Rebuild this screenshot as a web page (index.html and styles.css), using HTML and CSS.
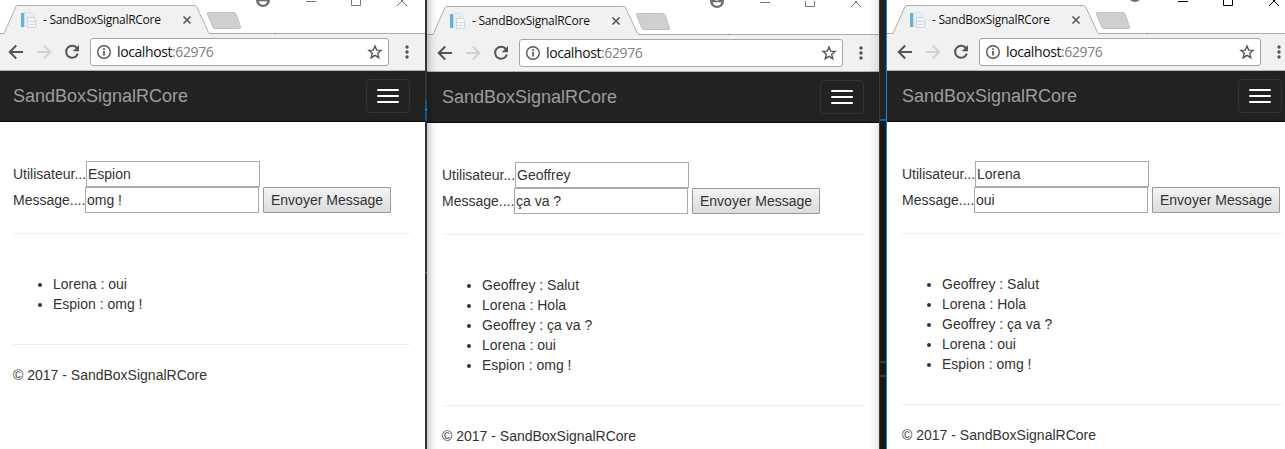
FILE: index.html
```
<!DOCTYPE html>
<html lang="fr">
<head>
<meta charset="utf-8">
<title>- SandBoxSignalRCore</title>
<link rel="stylesheet" href="styles.css">
</head>
<body>
<svg class="defs" width="0" height="0">
  <symbol id="tab" viewBox="0 0 250 34">
    <path d="M6 34 L18 6.500 Q18.500 5.500 20 5.500 H196.500 Q198 5.500 198.500 6.500 L210.500 32.500 L211 34Z" fill="#f1f1f1"/>
    <path d="M0 33.500 H5 Q6 33.500 6.500 32.500 L18 6.500 Q18.500 5.500 20 5.500 H196.500 Q198 5.500 198.500 6.500 L210.500 32.500 Q211 33.500 212 33.500 H250" fill="none" stroke="#adadad"/>
    <path d="M210.500 12.500 H236 Q237.500 12.500 238 14 L242.600 27 Q243 28.500 241.500 28.500 H217 Q215.500 28.500 214.800 27 L209.400 14 Q208.800 12.500 210.500 12.500Z" fill="#cfcfcf" stroke="#c0c0c0"/>
    <path d="M23 13 H26.500 V27 H23Z" fill="#68afd8"/>
    <path d="M26.500 12.500 H33 L36 15.500 V26.500 H26.500Z" fill="#e8eef5" stroke="#d3dce5" stroke-width=".7"/>
    <path d="M29.500 17.500 H36 L37.700 19.500 V27.500 H29.500Z" fill="#f3f6fa" stroke="#c5ced8" stroke-width=".8"/>
    <path d="M30 21.500H37M31 24.500H36" stroke="#d0d9e5"/>
    <path d="M185.500 16.500 L192.500 23.500 M192.500 16.500 L185.500 23.500" stroke="#555" stroke-width="1.600"/>
  </symbol>
  <symbol id="back" viewBox="0 0 16 16"><path d="M15 8H2M8.200 1.500L1.700 8l6.500 6.500" fill="none" stroke="currentColor" stroke-width="2"/></symbol>
  <symbol id="forward" viewBox="0 0 16 16"><path d="M1 8H14M7.800 1.500L14.300 8l-6.500 6.500" fill="none" stroke="currentColor" stroke-width="2"/></symbol>
  <symbol id="reload" viewBox="0 0 16 16"><path d="M13 4.200A6 6 0 1 0 13.800 9.700" fill="none" stroke="#555" stroke-width="2"/><path d="M15 1V7.300H8.700Z" fill="#555"/></symbol>
  <symbol id="info" viewBox="0 0 16 16"><circle cx="8" cy="8" r="6.300" fill="none" stroke="#555" stroke-width="1.400"/><path d="M8 7V11.500M8 4.300V6" stroke="#555" stroke-width="1.700"/></symbol>
  <symbol id="star" viewBox="0 0 16 16"><path d="M8 2L9.700 6.100L14.100 6.400L10.700 9.300L11.800 13.700L8 11.300L4.200 13.700L5.300 9.300L1.900 6.400L6.300 6.100Z" fill="none" stroke="#555" stroke-width="1.400"/></symbol>
  <symbol id="dots" viewBox="0 0 4 14"><g fill="#555"><circle cx="2" cy="2" r="1.700"/><circle cx="2" cy="7" r="1.700"/><circle cx="2" cy="12" r="1.700"/></g></symbol>
  <symbol id="controls" viewBox="0 0 180 34">
    <path d="M61 1.500H71M106.500 -4V5.500H115.500V-4M152 6L162 -4M152 -4L162 6" fill="none" stroke="currentColor"/>
    <path d="M30 33.500H31" stroke="#555"/>
  </symbol>
  <symbol id="user" viewBox="0 0 16 16"><circle cx="8" cy="8" r="7" fill="#6e6e6e"/><circle cx="8" cy="5.500" r="2.300" fill="#fff"/><path d="M3.800 9.200H12.200Q11.500 12.700 8 12.700T3.800 9.200Z" fill="#fff"/></symbol>
</svg>
<div class="desktop">
  <section class="window window-left">
    <header class="tabstrip">
      <svg class="tab-shape"><use href="#tab"/></svg>
      <span class="tab-title">- SandBoxSignalRCore</span>
      <svg class="user"><use href="#user"/></svg>
      <svg class="controls"><use href="#controls"/></svg>
    </header>
    <div class="toolbar">
      <svg class="icon"><use href="#back"/></svg><svg class="icon off"><use href="#forward"/></svg><svg class="icon"><use href="#reload"/></svg>
      <div class="address"><svg class="icon"><use href="#info"/></svg><span class="url">localhost<i>:62976</i></span><svg class="icon"><use href="#star"/></svg></div>
      <svg class="dots"><use href="#dots"/></svg>
    </div>
    <nav class="navbar"><span class="brand">SandBoxSignalRCore</span><button class="toggle"><b></b><b></b><b></b></button></nav>
    <main class="page">
      <div class="row"><label class="name">Utilisateur...</label><input class="field" value="Espion"></div>
      <div class="row"><label class="message">Message....</label><input class="field" value="omg !"><button class="send">Envoyer Message</button></div>
      <hr>
      <ul class="messages"><li>Lorena : oui</li><li>Espion : omg !</li></ul>
      <hr>
      <footer>© 2017 - SandBoxSignalRCore</footer>
    </main>
  </section>
  <div class="seam"></div>
  <section class="window window-middle">
    <header class="tabstrip">
      <svg class="tab-shape"><use href="#tab"/></svg>
      <span class="tab-title">- SandBoxSignalRCore</span>
      <svg class="user"><use href="#user"/></svg>
      <svg class="controls"><use href="#controls"/></svg>
    </header>
    <div class="toolbar">
      <svg class="icon"><use href="#back"/></svg><svg class="icon off"><use href="#forward"/></svg><svg class="icon"><use href="#reload"/></svg>
      <div class="address"><svg class="icon"><use href="#info"/></svg><span class="url">localhost<i>:62976</i></span><svg class="icon"><use href="#star"/></svg></div>
      <svg class="dots"><use href="#dots"/></svg>
    </div>
    <nav class="navbar"><span class="brand">SandBoxSignalRCore</span><button class="toggle"><b></b><b></b><b></b></button></nav>
    <main class="page">
      <div class="row"><label class="name">Utilisateur...</label><input class="field" value="Geoffrey"></div>
      <div class="row"><label class="message">Message....</label><input class="field" value="ça va ?"><button class="send">Envoyer Message</button></div>
      <hr>
      <ul class="messages"><li>Geoffrey : Salut</li><li>Lorena : Hola</li><li>Geoffrey : ça va ?</li><li>Lorena : oui</li><li>Espion : omg !</li></ul>
      <hr>
      <footer>© 2017 - SandBoxSignalRCore</footer>
    </main>
  </section>
  <div class="gap"></div>
  <section class="window window-right">
    <header class="tabstrip">
      <svg class="tab-shape"><use href="#tab"/></svg>
      <span class="tab-title">- SandBoxSignalRCore</span>
      <svg class="user"><use href="#user"/></svg>
      <svg class="controls"><use href="#controls"/></svg>
    </header>
    <div class="toolbar">
      <svg class="icon"><use href="#back"/></svg><svg class="icon off"><use href="#forward"/></svg><svg class="icon"><use href="#reload"/></svg>
      <div class="address"><svg class="icon"><use href="#info"/></svg><span class="url">localhost<i>:62976</i></span><svg class="icon"><use href="#star"/></svg></div>
      <svg class="dots"><use href="#dots"/></svg>
    </div>
    <nav class="navbar"><span class="brand">SandBoxSignalRCore</span><button class="toggle"><b></b><b></b><b></b></button></nav>
    <main class="page">
      <div class="row"><label class="name">Utilisateur...</label><input class="field" value="Lorena"></div>
      <div class="row"><label class="message">Message....</label><input class="field" value="oui"><button class="send">Envoyer Message</button></div>
      <hr>
      <ul class="messages"><li>Geoffrey : Salut</li><li>Lorena : Hola</li><li>Geoffrey : ça va ?</li><li>Lorena : oui</li><li>Espion : omg !</li></ul>
      <hr>
      <footer>© 2017 - SandBoxSignalRCore</footer>
    </main>
  </section>
</div>
</body>
</html>
```
FILE: styles.css
```
* { box-sizing: border-box; }
body { margin: 0; overflow: hidden; font: 14px/20px "Liberation Sans", Arial, sans-serif; color: #333; }
.defs { position: absolute; }
.desktop { display: flex; width: 1285px; height: 449px; overflow: hidden; background: #fff; }
.window { position: relative; flex: none; height: 449px; overflow: hidden; background: #fff; }
.window-left { width: 427px; margin-left: -2px; }
.window-middle { width: 452px; padding-top: 1px; }
.window-right { width: 410px; }
.window-middle::before, .window-middle::after { content: ""; position: absolute; top: 0; bottom: 0; width: 11px; z-index: 2; }
.window-middle::before { left: 0; background: linear-gradient(90deg, rgba(0,0,0,.2), rgba(0,0,0,.05) 50%, transparent); }
.window-middle::after { right: 0; background: linear-gradient(270deg, rgba(0,0,0,.09), rgba(0,0,0,.03) 50%, transparent); }
.seam { flex: none; width: 2px; background: linear-gradient(#333 90px, #303438 90px, #303438 100px, #155682 100px, #155682 109px, #5591b7 109px, #5591b7 110px, #155682 110px, #155682 121px, #303030 121px, #303030 272px, #666 272px, #666 273px, #303030 273px); }
.gap { flex: none; width: 8px; border-left: 1px solid #3a3a3a; border-right: 1px solid #1883d7; background: linear-gradient(#202225 119px, #07629c 119px, #07629c 121px, #191919 121px, #191919 361px, #363636 361px, #363636 363px, #191919 363px, #191919 375px, #363636 375px, #363636 377px, #191919 377px); }

.tabstrip { position: relative; height: 34px; display: flex; background: linear-gradient(#adadad, #adadad) 0 33px / 100% 1px no-repeat #fff; }
.tab-shape { flex: none; width: 250px; height: 34px; }
.tab-title { position: absolute; left: 45px; top: 11px; font: 12px/18px "Open Sans", sans-serif; letter-spacing: -.28px; color: #111; white-space: nowrap; }
.user { position: absolute; right: 154px; top: -8px; width: 16px; height: 16px; }
.window-right .user { top: -13px; }
.controls { position: absolute; right: 0; top: 0; width: 180px; height: 34px; color: #777; }
.window-right .controls { color: #000; }

.toolbar { display: flex; align-items: center; height: 37px; padding: 0 16px 1px 10px; background: #f1f1f1; border-bottom: 1px solid #b4b4b4; }
.icon { flex: none; width: 16px; height: 16px; margin-right: 12px; color: #555; }
.off { color: #d2d2d2; }
.address { display: flex; align-items: center; flex: 1; height: 28px; margin-left: -2px; padding: 0 5px; border: 1px solid #a8a8a8; border-radius: 3px; background: #fff; }
.address .icon { margin-right: 0; }
.url { flex: 1; margin-left: 5px; font: 14px/20px "Open Sans", sans-serif; letter-spacing: -.4px; color: #111; }
.url i { font-style: normal; color: #808080; }
.dots { flex: none; width: 4px; height: 14px; margin-left: 16px; }

.navbar { display: flex; align-items: center; justify-content: space-between; height: 51px; padding: 0 15px; background: #222; border-bottom: 1px solid #080808; }
.brand { font-size: 18px; color: #9d9d9d; }
.toggle { display: flex; flex-direction: column; gap: 4px; width: 44px; height: 34px; padding: 9px 10px; border: 1px solid #333; border-radius: 4px; background: transparent; }
.toggle b { width: 22px; height: 2px; border-radius: 1px; background: #fff; }

.page { padding: 39px 15px 0; }
.row { display: flex; height: 26px; line-height: 26px; }
.name { width: 73px; }
.message { width: 72px; }
.field { width: 174px; height: 26px; padding: 1px; border: 1px solid #a9a9a9; font: inherit; color: #333; background: #fff; }
.send { width: 128px; height: 26px; margin-left: 4px; padding: 0; border: 1px solid #999; border-radius: 1px; background: linear-gradient(#f4f4f4, #dcdcdc); font: inherit; line-height: 20px; color: #333; white-space: nowrap; }
hr { margin: 20px 0; height: 1px; border: 0; background: #eee; }
.messages { margin: 40px 0 30px; padding-left: 40px; }
.messages + hr { margin-top: 0; }
```
